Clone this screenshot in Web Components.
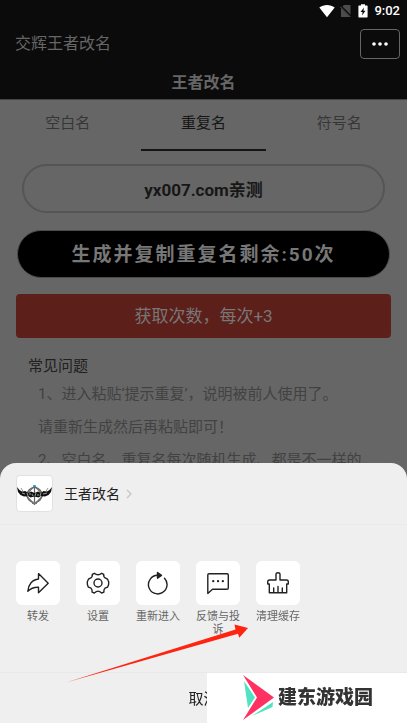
<!DOCTYPE html>
<html lang="zh-CN">
<head>
<meta charset="utf-8">
<meta name="viewport" content="width=device-width, initial-scale=1">
<title>王者改名</title>
<style>
html { height: 100%; }
body { margin: 0; min-height: 100%; overflow: hidden; background: #666; font-family: Roboto, "Noto Sans CJK SC", sans-serif; }
</style>
</head>
<body>
<rename-app></rename-app>
<script>
function define(name, html, setup) {
  const template = document.createElement('template');
  template.innerHTML = '<style>*{box-sizing:border-box}button,input{font:inherit;color:inherit;margin:0;padding:0;border:0;background:none}svg{display:block}</style>' + html;
  customElements.define(name, class extends HTMLElement {
    constructor() {
      super();
      this.attachShadow({ mode: 'open' }).append(template.content.cloneNode(true));
    }
    connectedCallback() { if (setup) setup(this, this.shadowRoot); }
  });
}

define('status-bar', `
<style>
:host { display: flex; justify-content: flex-end; align-items: center; height: 22px; padding: 0 7px 0 0; gap: 5px; color: #fff; font-size: 13px; line-height: 22px; font-weight: 500; }
time { display: block; }
</style>
<svg width="16" height="14" viewBox="0 0 16 14"><path d="M.3 3.6C4.600.1 11.400.1 15.700 3.600L8 13.200Z" fill="#fff"/></svg>
<svg width="12" height="14" viewBox="0 0 12 14"><path d="M4 1h6.500V13H1V4Z" fill="#4c4c4c"/><path d="M0 1.500L11.500 13" stroke="#0b0b0b" stroke-width="2"/><path d="M0 2.500L10.500 13" stroke="#555" stroke-width="1"/></svg>
<svg width="12" height="14" viewBox="0 0 12 14"><path d="M2 1.500h2V.3h4v1.200h2q.6 0 .6.600V12.800q0 .6-.6.600H2q-.6 0-.6-.6V2.100q0-.6.6-.6Z" fill="#fff"/><path d="M7 3.500L3.500 8H5.600L5 11.500 8.500 6.800H6.400Z" fill="#0b0b0b"/></svg>
<time>9:02</time>`);

define('nav-bar', `
<style>
:host { display: block; color: #666; font-size: 16px; line-height: 24px; }
.top { display: flex; align-items: center; justify-content: space-between; height: 43px; padding: 0 7px 0 15px; }
button { display: grid; place-items: center; width: 40px; height: 30px; border: 1px solid #666; border-radius: 4px; color: #fff; }
h1 { margin: 0; padding: 6px 0 4px; font-size: 16px; line-height: 24px; font-weight: 700; text-align: center; }
</style>
<div class="top"><slot name="app"></slot>
<button aria-label="更多"><svg width="18" height="6" viewBox="0 0 18 6" fill="#fff"><circle cx="3" cy="3" r="1.800"/><circle cx="9" cy="3" r="1.800"/><circle cx="15" cy="3" r="1.800"/></svg></button></div>
<h1><slot></slot></h1>`);

define('tab-row', `
<style>
:host { display: flex; justify-content: space-around; }
button { flex: 1; display: flex; flex-direction: column; align-items: center; gap: 14px; padding-top: 11px; font-size: 15px; line-height: 24px; color: #363636; }
button::after { content: ""; width: 92%; height: 2px; }
button[aria-selected=true] { color: #151515; }
button[aria-selected=true]::after { background: #151515; }
</style>
<button role="tab" aria-selected="false">空白名</button><button role="tab" aria-selected="true">重复名</button><button role="tab" aria-selected="false">符号名</button>`);

define('name-form', `
<style>
:host { display: flex; flex-direction: column; padding: 13px 16px 0; }
input { margin: 0 6px; min-width: 0; height: 49px; padding-bottom: 1px; border: 2px solid #555; border-radius: 25px; text-align: center; font-size: 17px; font-weight: 700; color: #171717; }
.make { margin: 17px 1px 0; height: 48px; padding-bottom: 4px; border: 1px solid #4b4b4b; border-radius: 24px; background: #000; color: #777; font-size: 19px; font-weight: 700; letter-spacing: 2px; }
.more { margin-top: 16px; height: 44px; padding-bottom: 3px; border-radius: 4px; background: #5d1f1a; color: #777; font-size: 17px; }
</style>
<input aria-label="名称" value="yx007.com亲测">
<button class="make">生成并复制重复名剩余:50次</button>
<button class="more">获取次数，每次+3</button>`);

define('faq-list', `
<style>
:host { display: block; padding: 16px 16px 0 28px; font-size: 15px; color: #424242; }
h2 { margin: 0; font-size: 15px; line-height: 24px; font-weight: 400; color: #202020; }
p { margin: 0; padding-left: 10px; line-height: 33px; white-space: nowrap; }
</style>
<h2>常见问题</h2>
<p>1、进入粘贴‘提示重复’，说明被前人使用了。</p>
<p>请重新生成然后再粘贴即可！</p>
<p>2、空白名、重复名每次随机生成、都是不一样的</p>`);

define('sheet-action', `
<style>
:host { display: block; width: 44px; }
button { display: flex; flex-direction: column; align-items: center; gap: 5px; width: 100%; font-size: 11px; line-height: 13px; color: #666; }
.tile { display: grid; place-items: center; width: 44px; height: 44px; border-radius: 6px; background: #fff; }
::slotted(svg) { display: block; width: 24px; height: 24px; fill: none; stroke: #222; stroke-width: 1.400; stroke-linejoin: round; stroke-linecap: round; }
</style>
<button><span class="tile"><slot name="icon"></slot></span><span><slot></slot></span></button>`);

define('brand-mark', `
<style>
:host { display: flex; align-items: center; gap: 4px; padding-left: 35px; background: #fff; color: #333; font-size: 19px; line-height: 28px; font-weight: 900; white-space: nowrap; }
</style>
<svg width="32" height="46" viewBox="0 0 32 46"><path d="M1 0L32 22.500 1 45 15 22.500Z" fill="#ff3163"/><path d="M2 6L13 22.500 6 33Z" fill="#50e3c2"/><path d="M31 27L30.500 32 10 41Z" fill="#50e3c2"/></svg>
<slot></slot>`);

define('action-sheet', `
<style>
:host { display: block; position: fixed; left: 0; right: 0; bottom: 0; overflow: hidden; border-radius: 16px 16px 0 0; background: #efefef; color: #222; }
header { display: flex; align-items: center; height: 62px; padding: 0 16px; border-bottom: 1px solid #eaeaea; font-size: 14px; }
.app { display: flex; align-items: center; gap: 11px; line-height: 24px; }
.avatar { width: 37px; height: 37px; border: 1px solid #e1e1e1; border-radius: 4px; background: #fff; }
.chev { margin-left: -5px; }
.actions { display: flex; align-items: flex-start; gap: 16px; height: 148px; padding: 36px 16px 0; border-bottom: 1px solid #e9e9e9; }
footer { display: grid; }
.cancel { height: 50px; padding-bottom: 2px; font-size: 15px; }
brand-mark { position: absolute; right: 0; bottom: 0; width: 200px; height: 50px; }
.pointer { position: absolute; left: 64px; bottom: 38px; pointer-events: none; }
</style>
<header><button class="app">
<span class="avatar"><svg width="35" height="35" viewBox="0 0 35 35" fill="none" stroke="#666">
<circle cx="17.500" cy="19" r="7.500" stroke-width="1.200"/><path d="M17.500 10L26.500 19 17.500 28.500 8.500 19ZM17.500 10V28.500" stroke-width="1.200"/>
<path d="M0 11L2.500 14 5 15.500 8.500 15 11 17 14 15.500 17.500 17 21 15.500 24 17 26.500 15 30 15.500 32.500 14 35 11 34 16 31.500 19 28 20.500 24 20 21.500 21.500 17.500 20.500 13.500 21.500 11 20 7 20.500 3.500 19 1 16Z" fill="#111" stroke="none"/>
<path d="M4 12l2.500 4m24.500-4-2.500 4" stroke="#777" stroke-width=".8"/><path d="M5 17l3 1m2-1 1 3m2-3v2m2-1 1 2m3-3-1 3m3-2v2m3-3-1 3m3-2 4-1" stroke="#bbb" stroke-width=".8"/><path d="M16 10h3" stroke="#169fd0" stroke-width="1.500"/><path d="M15 27h5" stroke="#777" stroke-width="2"/></svg></span>
<span>王者改名</span>
<svg class="chev" width="6" height="10" viewBox="0 0 6 10" fill="none" stroke="#c4c4c4" stroke-width="1.200"><path d="M1 1l4 4-4 4"/></svg>
</button></header>
<div class="actions">
<sheet-action><svg slot="icon" viewBox="0 0 24 24"><path d="M12.500 2.600L22.200 12.200 12.500 21.800V16.200C8 16 4.500 17.500 1.800 20.300C2.200 14 6 8.600 12.500 8Z"/></svg>转发</sheet-action>
<sheet-action><svg slot="icon" viewBox="0 0 24 24"><circle cx="12" cy="12" r="4"/><path d="M8.300 2.300L6.300 3.400Q6.600 6.700 4 7.300Q2.700 7.500 1.900 9.300Q1 11 1.300 12Q1.100 14 2.400 16.100L5 17.200Q6.500 18.500 6.100 21.200L8.300 22Q10.400 20.100 12 20.100T15.700 22L17.900 21.200Q17.500 18.500 19 17.200L21.600 16.100Q22.900 14 22.700 12Q23 11 22.100 9.300Q21.300 7.500 20 7.300Q17.400 6.700 17.700 3.400L15.700 2.300Q14 3.800 12 3.800T8.300 2.300Z"/></svg>设置</sheet-action>
<sheet-action><svg slot="icon" viewBox="0 0 24 24"><path d="M18.500 7.200A9.300 9.300 0 1 1 11.500 4.300"/><path d="M11.500 1.500L15.500 4.400 11.500 7.200Z" fill="#222"/></svg>重新进入</sheet-action>
<sheet-action><svg slot="icon" viewBox="0 0 24 24"><path d="M3 2.700H21Q22.300 2.700 22.300 4V17Q22.300 18.200 21 18.200H6.500L1.800 22.400V4Q1.800 2.700 3 2.700Z"/><path d="M7.200 10.200h.1M12 10.200h.1M16.800 10.200h.1" stroke-width="2.200"/></svg>反馈与投诉</sheet-action>
<sheet-action><svg slot="icon" viewBox="0 0 24 24"><path d="M10 9V3Q10 1.800 12 1.800T14 3V9H20.500Q22.300 9 22.300 11V13H20.700V21.700H3.300V13H1.700V11Q1.700 9 3.500 9ZM7.700 21.500V17M12 21.500V15.500M16.300 21.500V17"/></svg>清理缓存</sheet-action>
</div>
<footer><button class="cancel">取消</button></footer>
<svg class="pointer" width="186" height="62" viewBox="0 0 186 62"><path d="M2 59.500L171.500 6.500 170.500 1.500 184 5 175.300 14.700 174 10.700Z" fill="#ff2410"/></svg>
<brand-mark>建东游戏园</brand-mark>`);

define('rename-app', `
<style>
:host { display: block; }
.head { background: #0b0b0b; border-bottom: 1px solid #444; }
</style>
<div class="head"><status-bar></status-bar><nav-bar><span slot="app">交辉王者改名</span>王者改名</nav-bar></div>
<main><tab-row></tab-row><name-form></name-form><faq-list></faq-list></main>
<action-sheet></action-sheet>`);
</script>
</body>
</html>
